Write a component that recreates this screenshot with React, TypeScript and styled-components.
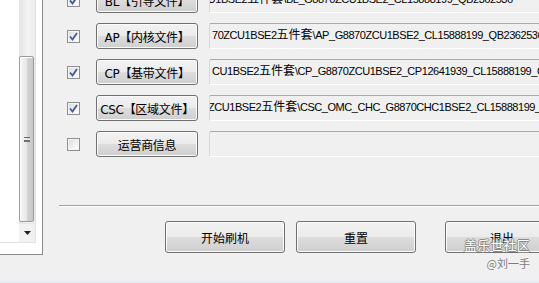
import React from "react";
import styled, { createGlobalStyle } from "styled-components";

const GlobalStyle = createGlobalStyle`
  html, body {
    margin: 0;
    padding: 0;
    background: #f0f0f0;
    overflow: hidden;
  }
  * { box-sizing: border-box; }
`;

const FONT = `"DejaVu Sans", "Noto Sans CJK SC", sans-serif`;

type FileRow = {
  id: string;
  label: string;
  head: string;
  tail: string;
  shift?: number;
  checked: boolean;
};

const ROWS: FileRow[] = [
  { id: "bl", label: "BL【引导文件】", head: "ZCU1BSE2", tail: "\\BL_G8870ZCU1BSE2_CL15888199_QB2362536", shift: -18, checked: true },
  { id: "ap", label: "AP【内核文件】", head: "70ZCU1BSE2", tail: "\\AP_G8870ZCU1BSE2_CL15888199_QB2362536", checked: true },
  { id: "cp", label: "CP【基带文件】", head: "CU1BSE2", tail: "\\CP_G8870ZCU1BSE2_CP12641939_CL15888199_C", checked: true },
  { id: "csc", label: "CSC【区域文件】", head: "ZCU1BSE2", tail: "\\CSC_OMC_CHC_G8870CHC1BSE2_CL15888199_C", shift: -4, checked: true },
  { id: "omc", label: "运营商信息", head: "", tail: "", checked: false },
];

export default function App() {
  return (
    <>
      <GlobalStyle />
      <Window>
        <Main>
          <LeftPanel>
            <ListBox>
              <ListContent />
              <ScrollBar>
                <Track>
                  <Thumb>
                    <Grip />
                  </Thumb>
                </Track>
                <ArrowButton>
                  <svg width="7" height="4" viewBox="0 0 7 4">
                    <path d="M0 0h7L3.5 4z" fill="#222" />
                  </svg>
                </ArrowButton>
              </ScrollBar>
            </ListBox>
          </LeftPanel>

          <RightArea>
            <Rows>
              {ROWS.map((row) => (
                <Row key={row.id}>
                  <CheckBox>
                    {row.checked && (
                      <svg width="9" height="9" viewBox="0 0 9 9">
                        <path
                          d="M1 4.5 L3.5 7.5 L8 1"
                          fill="none"
                          stroke="#44569a"
                          strokeWidth="1.8"
                        />
                      </svg>
                    )}
                  </CheckBox>
                  <FileButton>{row.label}</FileButton>
                  <PathField>
                    {row.head && (
                      <PathText $shift={row.shift ?? 0}>
                        {row.head}
                        <Cjk>五件套</Cjk>
                        {row.tail}
                      </PathText>
                    )}
                  </PathField>
                </Row>
              ))}
            </Rows>
            <Separator />
            <Actions>
              <ActionButton>开始刷机</ActionButton>
              <ActionButton>重置</ActionButton>
              <ActionButton $exit>退出</ActionButton>
            </Actions>
          </RightArea>
        </Main>

        <Watermark>
          <WatermarkTitle>盖乐世社区</WatermarkTitle>
          <WatermarkUser>@刘一手</WatermarkUser>
        </Watermark>
      </Window>
    </>
  );
}

const Window = styled.div`
  position: relative;
  width: 539px;
  height: 283px;
  overflow: hidden;
  background: #f0f0f0;
  border-bottom: 1px solid #dce8f4;
  font-family: ${FONT};
`;

const Main = styled.div`
  display: flex;
  align-items: flex-start;
`;

const LeftPanel = styled.div`
  width: 43px;
  height: 255px;
  flex: none;
  background: #ffffff;
  border-right: 1px solid #8a8a8a;
  border-bottom: 1px solid #8a8a8a;
`;

const ListBox = styled.div`
  display: flex;
  width: 36px;
  height: 243px;
  border-right: 1px solid #e2e2e2;
  border-bottom: 1px solid #e2e2e2;
`;

const ListContent = styled.div`
  width: 19px;
  background: #ffffff;
`;

const ScrollBar = styled.div`
  width: 16px;
  display: flex;
  flex-direction: column;
  background: linear-gradient(to right, #e4e4e4, #f4f4f4 60%, #ececec);
`;

const Track = styled.div`
  flex: 1;
  display: flex;
  flex-direction: column;
  justify-content: flex-end;
`;

const Thumb = styled.div`
  height: 166px;
  margin: 0 1px 1px 0;
  border: 1px solid #9b9b9b;
  border-radius: 2px;
  background: linear-gradient(to right, #f6f6f6, #e8e8e8 50%, #d4d4d4 51%, #c8c8c8);
  box-shadow: inset 1px 1px 0 #ffffff;
  display: flex;
  align-items: center;
  justify-content: center;
`;

const Grip = styled.div`
  width: 6px;
  height: 5px;
  border-top: 1px solid #6e6e6e;
  border-bottom: 1px solid #6e6e6e;
  background: linear-gradient(#f0f0f0 0 1px, #6e6e6e 1px 2px, transparent 2px);
  background-position: 0 1px;
  background-repeat: no-repeat;
`;

const ArrowButton = styled.div`
  height: 19px;
  display: flex;
  align-items: center;
  justify-content: center;
  background: #f2f2f2;
  border-top: 1px solid #e6e6e6;
`;

const RightArea = styled.div`
  flex: 1;
  margin-left: 16px;
  display: flex;
  flex-direction: column;
`;

const Rows = styled.div`
  display: flex;
  flex-direction: column;
  gap: 10px;
  margin-top: -13px;
  padding-left: 8px;
`;

const Row = styled.div`
  display: flex;
  align-items: center;
  height: 26px;
`;

const CheckBox = styled.div`
  width: 13px;
  height: 13px;
  flex: none;
  border: 1px solid #8f8f8f;
  background: linear-gradient(135deg, #d9d9d9, #f7f7f7 70%, #ffffff);
  box-shadow: inset 0 0 0 1px #f4f4f4;
  display: flex;
  align-items: center;
  justify-content: center;
  margin-top: 1px;
`;

const winButton = `
  border: 1px solid #707070;
  border-radius: 3px;
  background: linear-gradient(#f2f2f2 0%, #ebebeb 50%, #dddddd 50%, #cfcfcf 100%);
  box-shadow: inset 0 0 0 1px #fbfbfb;
  color: #000000;
  display: flex;
  align-items: center;
  justify-content: center;
  white-space: nowrap;
  padding: 0;
`;

const FileButton = styled.div`
  ${winButton}
  width: 102px;
  height: 26px;
  flex: none;
  margin-left: 16px;
  font-size: 12px;
  letter-spacing: -0.3px;
`;

const PathField = styled.div`
  flex: 1;
  height: 26px;
  margin-left: 11px;
  border: 1px solid;
  border-color: #a9a9a9 #dcdcdc #ffffff #d8d8d8;
  border-radius: 2px;
  background: #f0f0f0;
  overflow: hidden;
  padding: 3px 0 0 2px;
`;

const PathText = styled.div<{ $shift: number }>`
  white-space: nowrap;
  font-family: "Liberation Sans", "Noto Sans CJK SC", sans-serif;
  font-size: 11px;
  line-height: 14px;
  letter-spacing: -0.45px;
  color: #000000;
  margin-left: ${(p) => p.$shift}px;
`;

const Cjk = styled.span`
  font-family: "Noto Sans CJK SC", sans-serif;
  font-size: 12px;
  letter-spacing: 0;
`;

const Separator = styled.div`
  margin-top: 48px;
  height: 2px;
  border-top: 1px solid #a0a0a0;
  border-bottom: 1px solid #ffffff;
`;

const Actions = styled.div`
  display: flex;
  margin-top: 14px;
  padding-left: 106px;
  gap: 11px;
`;

const ActionButton = styled.div<{ $exit?: boolean }>`
  ${winButton}
  width: ${(p) => (p.$exit ? "114px" : "120px")};
  height: 32px;
  flex: none;
  font-size: 12px;
  margin-left: ${(p) => (p.$exit ? "18px" : "0")};
`;

const Watermark = styled.div`
  position: absolute;
  left: 464px;
  top: 237px;
  display: flex;
  flex-direction: column;
  align-items: flex-end;
  pointer-events: none;
`;

const WatermarkTitle = styled.div`
  font-family: "Noto Sans CJK SC", sans-serif;
  font-size: 13px;
  line-height: 16px;
  color: #ffffff;
  letter-spacing: 0.2px;
  text-shadow: 1px 0 0 #8a8a8a, -1px 0 0 #8a8a8a, 0 1px 0 #8a8a8a, 0 -1px 0 #8a8a8a;
`;

const WatermarkUser = styled.div`
  font-family: "Noto Sans CJK SC", sans-serif;
  font-size: 11px;
  line-height: 14px;
  margin-top: 3px;
  color: #7a7a7a;
  text-shadow: 0 0 2px #ffffff;
`;
